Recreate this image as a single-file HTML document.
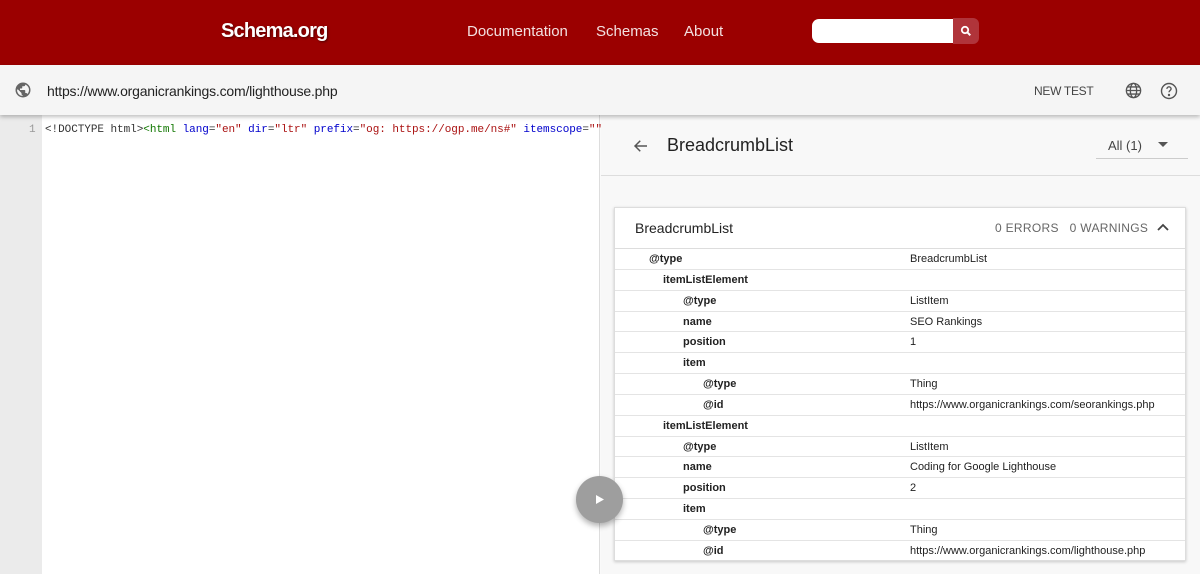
<!DOCTYPE html>
<html><head><style>
*{margin:0;padding:0;box-sizing:border-box}
body{width:1200px;height:574px;overflow:hidden;font-family:"Liberation Sans",sans-serif;background:#fafafa;position:relative}
.hdr{position:absolute;left:0;top:0;width:1200px;height:65px;background:#9b0000}
.logo{position:absolute;left:221px;top:20px;color:#fff;font-weight:bold;font-size:20px;letter-spacing:-0.8px;text-shadow:1px 1px 2px rgba(0,0,0,.5)}
.nav{position:absolute;top:23px;color:#f3e0e0;font-size:15px}
.search{position:absolute;left:812px;top:19px;width:142px;height:24px;background:#fff;border-radius:7px 0 0 7px}
.sbtn{position:absolute;left:953px;top:18px;width:26px;height:26px;background:#b0343a;border-radius:0 6px 6px 0}
.tb{position:absolute;left:0;top:65px;width:1200px;height:50px;background:#f5f5f5;box-shadow:0 2px 4px rgba(0,0,0,.25);z-index:2}
.url{position:absolute;left:47px;top:18px;font-size:14px;color:#222;letter-spacing:-0.2px}
.newtest{position:absolute;left:1034px;top:19px;font-size:12px;color:#444;letter-spacing:-0.3px}
.gut{position:absolute;left:0;top:115px;width:42px;height:459px;background:#ebebeb}
.code{position:absolute;left:42px;top:115px;width:558px;height:459px;background:#fff;border-right:1px solid #ddd}
.ln{position:absolute;left:29px;top:124px;font:11px "Liberation Mono",monospace;color:#999}
.ct{position:absolute;left:45px;top:124px;font:11px "Liberation Mono",monospace;color:#333;white-space:pre;letter-spacing:-0.05px}
.t{color:#170}.a{color:#00c}.s{color:#a11}
.rp{position:absolute;left:601px;top:115px;width:599px;height:459px;background:#f8f8f8}
.rh{position:absolute;left:601px;top:115px;width:599px;height:61px;border-bottom:1px solid #ddd;background:#f8f8f8}
.title{position:absolute;left:667px;top:135px;font-size:18px;color:#222}
.all{position:absolute;left:1108px;top:138px;font-size:13px;color:#444}
.allline{position:absolute;left:1096px;top:158px;width:92px;height:1px;background:#ccc}
.card{position:absolute;left:614px;top:207px;width:572px;height:354px;background:#fff;border:1px solid #ddd;box-shadow:0 1px 3px rgba(0,0,0,.2)}
.ch{height:41px;border-bottom:1px solid #ddd;position:relative}
.ch .n{position:absolute;left:20px;top:12px;font-size:14px;color:#222}
.ch .e{position:absolute;left:380px;top:13px;font-size:12px;color:#666;letter-spacing:.3px}
.row{height:20.85px;border-bottom:1px solid #e4e4e4;position:relative;font-size:11px;color:#222}
.row .k{position:absolute;top:4px;font-weight:bold}
.row .v{position:absolute;left:295px;top:4px}
.fab{position:absolute;left:576px;top:476px;width:47px;height:47px;border-radius:50%;background:#9e9e9e;box-shadow:0 3px 6px rgba(0,0,0,.3);z-index:3}
</style></head><body>
<div class="hdr">
<div class="logo">Schema.org</div>
<div class="nav" style="left:467px">Documentation</div>
<div class="nav" style="left:596px">Schemas</div>
<div class="nav" style="left:684px">About</div>
<div class="search"></div>
<div class="sbtn"><svg width="26" height="26"><circle cx="12" cy="12" r="3.2" fill="none" stroke="#fff" stroke-width="1.8"/><path d="M14.3 14.3l3 3" stroke="#fff" stroke-width="2"/></svg></div>
</div>
<div class="tb">
<svg style="position:absolute;left:14px;top:16px" width="18" height="18" viewBox="0 0 24 24"><path fill="#666" d="M12 2a10 10 0 100 20 10 10 0 000-20zm-1 17.9A8 8 0 014 12l1-1 5 5v1a2 2 0 002 2zm6.9-2.5A2 2 0 0016 16h-1v-3a1 1 0 00-1-1H8v-2h2a1 1 0 001-1V7h2a2 2 0 002-2v-.4a8 8 0 012.9 12.8z"/></svg>
<div class="url">https://www.organicrankings.com/lighthouse.php</div>
<div class="newtest">NEW TEST</div>
<svg style="position:absolute;left:1124px;top:16px" width="19" height="19" viewBox="0 0 24 24" fill="none" stroke="#555" stroke-width="1.7"><circle cx="12" cy="12" r="9"/><ellipse cx="12" cy="12" rx="4" ry="9"/><path d="M3 12h18M4.5 7.5h15M4.5 16.5h15"/></svg>
<svg style="position:absolute;left:1159px;top:16px" width="20" height="20" viewBox="0 0 24 24" fill="none" stroke="#555" stroke-width="1.7"><circle cx="12" cy="12" r="9"/><path d="M9.5 9.5a2.5 2.5 0 115 0c0 1.8-2.5 2-2.5 4"/><circle cx="12" cy="16.8" r=".6" fill="#555"/></svg>
</div>
<div class="gut"></div><div class="code"></div>
<div class="ln">1</div>
<div class="ct">&lt;!DOCTYPE html&gt;<span class="t">&lt;html</span> <span class="a">lang</span>=<span class="s">"en"</span> <span class="a">dir</span>=<span class="s">"ltr"</span> <span class="a">prefix</span>=<span class="s">"og: https://ogp.me/ns#"</span> <span class="a">itemscope</span>=<span class="s">""</span></div>
<div class="rp"></div>
<div class="rh"></div>
<svg style="position:absolute;left:632px;top:137px" width="18" height="18" viewBox="0 0 24 24"><path d="M20 12H5M11 5l-7 7 7 7" fill="none" stroke="#555" stroke-width="2"/></svg>
<div class="title">BreadcrumbList</div>
<div class="all">All (1)</div>
<svg style="position:absolute;left:1158px;top:142px" width="10" height="6"><path d="M0 0h10L5 5z" fill="#555"/></svg>
<div class="allline"></div>
<div class="card">
<div class="ch"><div class="n">BreadcrumbList</div><div class="e">0 ERRORS&nbsp;&nbsp;&nbsp;0 WARNINGS</div>
<svg style="position:absolute;left:542px;top:15px" width="12" height="8"><path d="M1 7l5-5 5 5" fill="none" stroke="#444" stroke-width="1.8"/></svg></div>
<div class="row"><span class="k" style="left:34px">@type</span><span class="v">BreadcrumbList</span></div>
<div class="row"><span class="k" style="left:48px">itemListElement</span></div>
<div class="row"><span class="k" style="left:68px">@type</span><span class="v">ListItem</span></div>
<div class="row"><span class="k" style="left:68px">name</span><span class="v">SEO Rankings</span></div>
<div class="row"><span class="k" style="left:68px">position</span><span class="v">1</span></div>
<div class="row"><span class="k" style="left:68px">item</span></div>
<div class="row"><span class="k" style="left:88px">@type</span><span class="v">Thing</span></div>
<div class="row"><span class="k" style="left:88px">@id</span><span class="v">https://www.organicrankings.com/seorankings.php</span></div>
<div class="row"><span class="k" style="left:48px">itemListElement</span></div>
<div class="row"><span class="k" style="left:68px">@type</span><span class="v">ListItem</span></div>
<div class="row"><span class="k" style="left:68px">name</span><span class="v">Coding for Google Lighthouse</span></div>
<div class="row"><span class="k" style="left:68px">position</span><span class="v">2</span></div>
<div class="row"><span class="k" style="left:68px">item</span></div>
<div class="row"><span class="k" style="left:88px">@type</span><span class="v">Thing</span></div>
<div class="row" style="border:0"><span class="k" style="left:88px">@id</span><span class="v">https://www.organicrankings.com/lighthouse.php</span></div>
</div>
<div class="fab"><svg width="47" height="47"><path d="M20 19l8 4.5-8 4.5z" fill="#fff"/></svg></div>
</body></html>
